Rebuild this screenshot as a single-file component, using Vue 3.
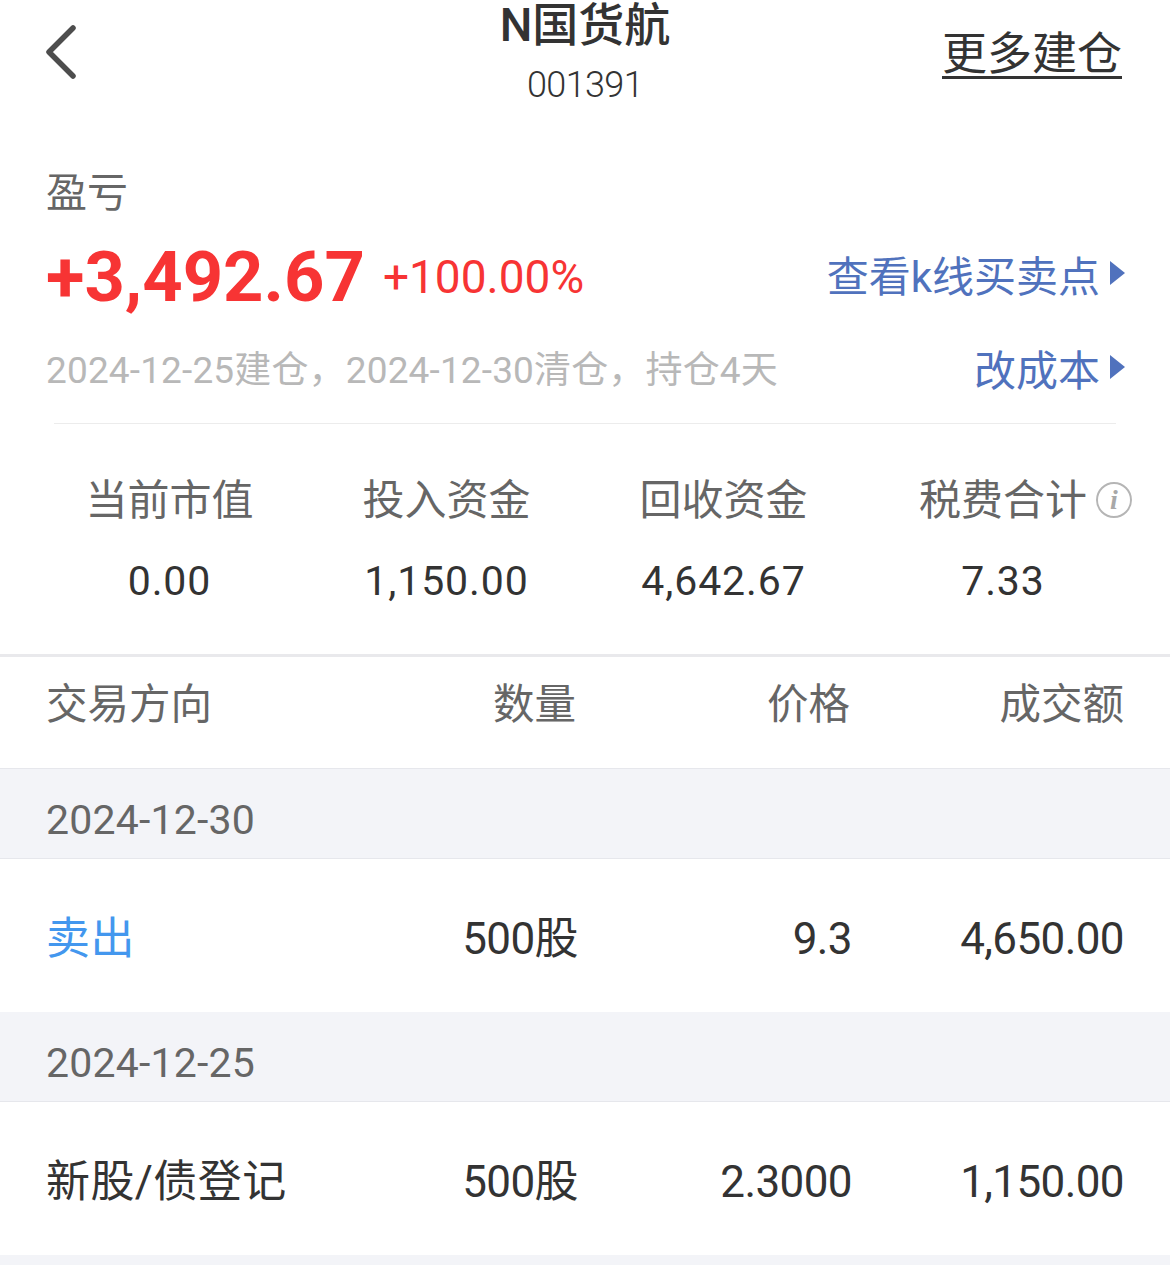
<script setup>
const stats = [
  { label: '当前市值', value: '0.00' },
  { label: '投入资金', value: '1,150.00' },
  { label: '回收资金', value: '4,642.67' },
  { label: '税费合计', value: '7.33', info: true },
]
const records = [
  { date: '2024-12-30', type: '卖出', sell: true, qty: '500股', price: '9.3', amount: '4,650.00' },
  { date: '2024-12-25', type: '新股/债登记', qty: '500股', price: '2.3000', amount: '1,150.00' },
]
</script>

<template>
  <div class="page">
    <div class="header">
      <svg class="back" viewBox="0 0 32 54" width="32" height="54">
        <path d="M28 3 L4 27 L28 51" fill="none" stroke="#4d4d4d" stroke-width="5.5" stroke-linecap="round" stroke-linejoin="round" />
      </svg>
      <div class="title_box">
        <div class="title">N国货航</div>
        <div class="code">001391</div>
      </div>
      <div class="more">更多建仓</div>
    </div>

    <div class="profit">
      <div class="profit_label">盈亏</div>
      <div class="profit_row">
        <span class="profit_num">+3,492.67</span>
        <span class="profit_pct">+100.00%</span>
        <span class="link"><span>查看k线买卖点</span><i class="arrow"></i></span>
      </div>
      <div class="hold_row">
        <span class="hold_text">2024-12-25建仓，2024-12-30清仓，持仓4天</span>
        <span class="link"><span>改成本</span><i class="arrow"></i></span>
      </div>
    </div>

    <div class="divider"></div>

    <div class="stats">
      <div class="stat" v-for="item in stats" :key="item.label">
        <div class="stat_label">
          {{ item.label }}
          <span class="info" v-if="item.info">i</span>
        </div>
        <div class="stat_value">{{ item.value }}</div>
      </div>
    </div>

    <div class="table_head grid">
      <span>交易方向</span>
      <span class="right head_inset">数量</span>
      <span class="right head_inset">价格</span>
      <span class="right">成交额</span>
    </div>

    <template v-for="row in records" :key="row.date">
      <div class="date_row">{{ row.date }}</div>
      <div class="record grid">
        <span class="type" :class="{ sell: row.sell }">{{ row.type }}</span>
        <span class="right">{{ row.qty }}</span>
        <span class="right">{{ row.price }}</span>
        <span class="right">{{ row.amount }}</span>
      </div>
    </template>
    <div class="bottom"></div>
  </div>
</template>

<style>
html, body {
  background: #fff;
  overflow: hidden;
}
</style>

<style scoped>
.page {
  position: relative;
  width: 1170px;
  height: 1265px;
  overflow: hidden;
  background: #fff;
  font-family: Roboto, "Noto Sans CJK SC", sans-serif;
  color: #333;
}
.header {
  position: relative;
  height: 130px;
}
.back {
  position: absolute;
  left: 45px;
  top: 25px;
}
.title_box {
  display: flex;
  flex-direction: column;
  align-items: center;
}
.title {
  font-size: 46px;
  line-height: 50px;
  font-weight: 500;
  color: #333;
}
.code {
  margin-top: 15px;
  font-size: 36px;
  font-weight: 300;
  line-height: 40px;
  letter-spacing: -0.6px;
  color: #333;
}
.more {
  position: absolute;
  right: 48px;
  top: 33px;
  font-size: 45px;
  line-height: 43px;
  color: #333;
  border-bottom: 3px solid #333;
}
.profit {
  padding: 36px 45px 0 46px;
}
.profit_label {
  font-size: 41px;
  line-height: 54px;
  color: #666;
}
.profit_row {
  display: flex;
  align-items: center;
  height: 100px;
  margin-top: 7px;
}
.profit_num {
  font-size: 70.5px;
  font-weight: 700;
  color: #f73434;
}
.profit_pct {
  margin-left: 18px;
  font-size: 46px;
  color: #f73434;
}
.link {
  display: flex;
  align-items: center;
  margin-left: auto;
  font-size: 42px;
  color: #5072bd;
}
.profit_row .link {
  margin-bottom: 8px;
}
.arrow {
  width: 0;
  height: 0;
  margin-left: 10px;
  border-left: 15px solid #5072bd;
  border-top: 12px solid transparent;
  border-bottom: 12px solid transparent;
}
.hold_row {
  display: flex;
  align-items: center;
  height: 60px;
  margin-top: 10px;
}
.hold_text {
  font-size: 37px;
  letter-spacing: 0.15px;
  color: #b8b8b8;
}
.divider {
  height: 1px;
  margin: 26px 54px 0;
  background: #ececec;
}
.stats {
  display: grid;
  grid-template-columns: 277px 277px 277px 282px;
  padding: 47px 0 0 31px;
  height: 233px;
  box-sizing: border-box;
  border-bottom: 3px solid #e9e9ec;
}
.stat {
  text-align: center;
}
.stat_label {
  position: relative;
  font-size: 42px;
  line-height: 60px;
  color: #666;
}
.stat_value {
  margin-top: 20px;
  font-size: 41px;
  line-height: 60px;
  letter-spacing: 0.9px;
  color: #333;
}
.info {
  position: absolute;
  left: 234px;
  top: 11px;
  width: 32px;
  height: 32px;
  border: 2px solid #b5b5b5;
  border-radius: 50%;
  font-family: "Liberation Serif", serif;
  font-style: italic;
  font-weight: 700;
  font-size: 28px;
  line-height: 32px;
  text-align: center;
  color: #a8a8a8;
}
.grid {
  display: grid;
  grid-template-columns: 272px 260px 274px 272px;
  padding: 0 46px;
  box-sizing: border-box;
}
.right {
  text-align: right;
}
.table_head {
  height: 112px;
  align-items: center;
  padding-bottom: 23px;
  border-bottom: 1px solid #e6e7ec;
  font-size: 41.5px;
  color: #666;
}
.head_inset {
  margin-right: 2px;
}
.date_row {
  height: 90px;
  box-sizing: border-box;
  padding: 7px 0 0 46px;
  border-bottom: 1px solid #e6e7ec;
  background: #f3f4f8;
  font-size: 41px;
  line-height: 89px;
  letter-spacing: 0.2px;
  color: #666;
}
.record {
  height: 153px;
  padding-top: 50px;
  align-items: baseline;
  align-content: start;
  font-size: 44px;
  line-height: 60px;
  letter-spacing: -0.6px;
  color: #333;
}
.type {
  letter-spacing: 0.4px;
}
.sell {
  color: #4397ee;
}
.bottom {
  height: 20px;
  background: #f3f4f8;
}
</style>
